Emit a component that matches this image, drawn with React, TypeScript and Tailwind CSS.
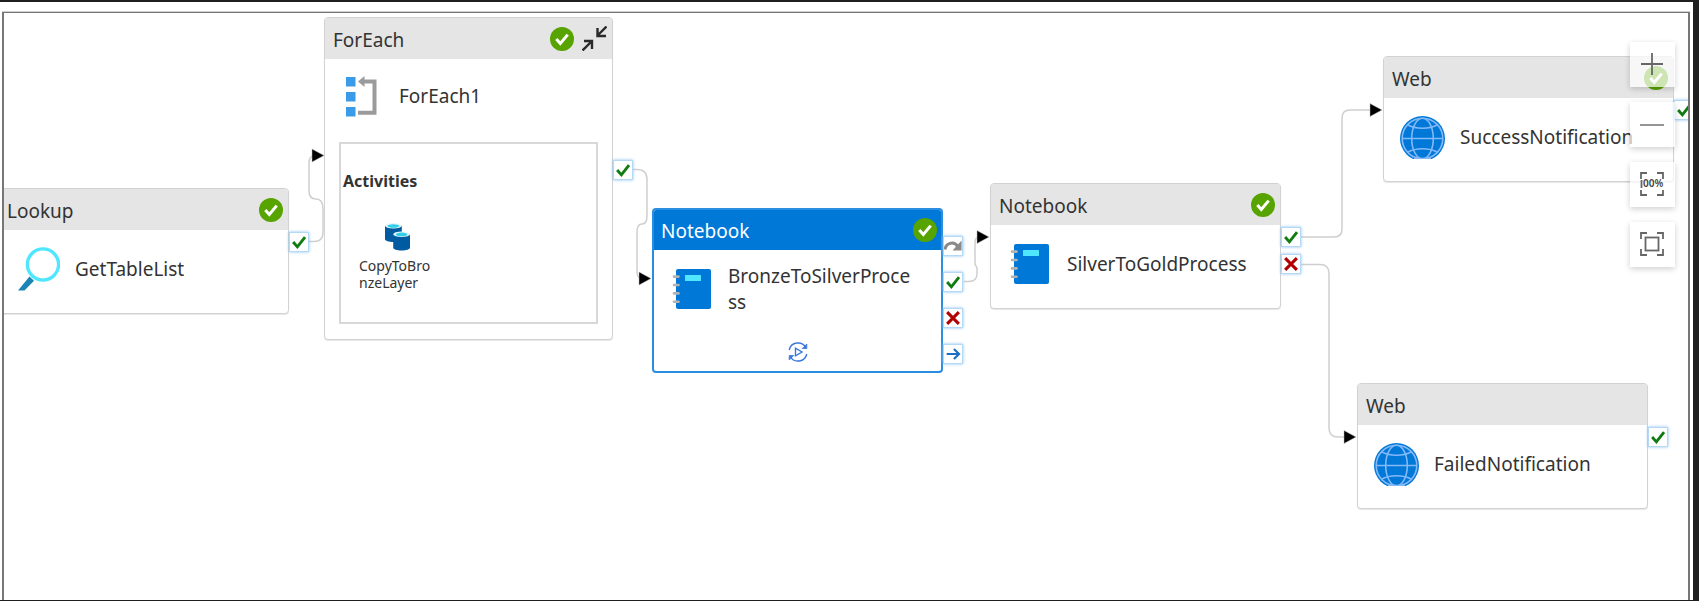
import type { ReactNode } from "react";

function StatusBadge() {
  return (
    <svg className="size-6 shrink-0" viewBox="0 0 24 24" role="img" aria-label="Succeeded">
      <circle cx="12" cy="12" r="12" fill="#57a300" />
      <path d="M6.3 12l4 4.400 7.400-8.800" fill="none" stroke="#fff" strokeWidth="3" />
    </svg>
  );
}

function LookupIcon() {
  return (
    <svg className="ml-1 h-11 w-[42px]" viewBox="0 0 42 44" aria-hidden="true">
      <path d="M11.5 29.5l4.5 4.3L6.5 43.5H0z" fill="#1b84b5" />
      <circle cx="25" cy="17.5" r="15.6" fill="#fff" stroke="#50e6ff" strokeWidth="3.4" />
    </svg>
  );
}

function ForEachIcon() {
  return (
    <svg className="h-[41px] w-8" viewBox="0 0 32 41" aria-hidden="true">
      <g fill="#3a9be8">
        <rect x="0" y="1" width="9.5" height="9.5" />
        <rect x="0" y="16" width="9.5" height="9.5" />
        <rect x="0" y="31" width="9.5" height="9.5" />
      </g>
      <path d="M17 5.5h11.5v31.3H12" fill="none" stroke="#9b9b9b" strokeWidth="4" />
      <path d="M12 5.5L18.5 0v11z" fill="#9b9b9b" />
    </svg>
  );
}

function NotebookIcon() {
  return (
    <svg className="h-10 w-[39px]" viewBox="0 0 39 40" aria-hidden="true">
      <rect x="4" y="0" width="35" height="40" rx="2" fill="#0078d7" />
      <rect x="13" y="6" width="16" height="6" rx="0.6" fill="#50e6ff" />
      <path d="M2 7.6h4.5M2 16h4.5M2 24.4h4.5M2 32.8h4.5" stroke="#b3b3b3" strokeWidth="2.6" strokeLinecap="round" />
    </svg>
  );
}

function GlobeIcon() {
  return (
    <svg className="h-[43px] w-[45px]" viewBox="0 0 45 43" aria-hidden="true">
      <circle cx="22.5" cy="22.5" r="22.5" fill="#0078d7" />
      <g fill="none" stroke="#83b9f9" strokeWidth="1.6">
        <circle cx="22.5" cy="22.5" r="20.3" />
        <ellipse cx="22.5" cy="22.5" rx="10.8" ry="20.3" />
        <path d="M2.2 22.5h40.6" />
        <path d="M7.5 8.8c8 4.6 22 4.6 30 0M7.5 36.2c8-4.6 22-4.6 30 0" />
      </g>
      <path d="M14 42.4h17" stroke="#83b9f9" strokeWidth="1.2" />
    </svg>
  );
}

function CopyDataIcon() {
  return (
    <svg className="h-7 w-[25px]" viewBox="0 0 25 28" aria-hidden="true">
      <path d="M0 2.8v13.4c0 1.5 3.8 2.8 8.4 2.8s8.4-1.3 8.4-2.8V2.8z" fill="#005ba1" />
      <ellipse cx="8.4" cy="2.8" rx="8.4" ry="2.8" fill="#e6f4fb" />
      <ellipse cx="8.4" cy="3" rx="5.8" ry="1.8" fill="#32cfe8" />
      <path d="M8.2 11.4v13.4c0 1.5 3.8 2.8 8.4 2.8s8.4-1.3 8.4-2.8V11.4z" fill="#005ba1" />
      <ellipse cx="16.6" cy="11.2" rx="8.4" ry="2.8" fill="#e6f4fb" />
      <ellipse cx="16.6" cy="11.4" rx="5.8" ry="1.8" fill="#32cfe8" />
    </svg>
  );
}

function CollapseIcon() {
  return (
    <svg className="size-[25px]" viewBox="0 0 25 25" fill="none" stroke="#2a2a2a" strokeWidth="2.4" aria-hidden="true">
      <path d="M24.500.5L15.500 9.500M15.500 2v8h8.500" />
      <path d="M.5 24.500l9.500-9.500M2 15h8v8" />
    </svg>
  );
}

function RerunIcon() {
  return (
    <svg className="size-5" viewBox="0 0 20 20" fill="none" stroke="#3b78dc" strokeWidth="1.4" aria-hidden="true">
      <path d="M1.2 8A9 9 0 0 1 17.8 5.500M18.800 12A9 9 0 0 1 2.200 14.500" />
      <path d="M18.800 2v4.500h-4.500zM1.200 18v-4.500h4.500z" fill="#3b78dc" strokeWidth="0.8" />
      <path d="M7.500 6.200v7.600l6.500-3.800z" />
    </svg>
  );
}

type PortKind = "skip" | "success" | "fail" | "completion";

const portLabels: Record<PortKind, string> = {
  skip: "On skip",
  success: "On success",
  fail: "On fail",
  completion: "On completion",
};

const portDrawings: Record<PortKind, ReactNode> = {
  skip: (
    <>
      <path d="M1 14C2.500 5.500 12 4.500 15.500 11" stroke="#8a8a8a" strokeWidth="3.4" />
      <path d="M19.500 4v11H9.500z" fill="#8a8a8a" />
    </>
  ),
  success: <path d="M3.500 10l4.700 5.400L16.700 4.500" stroke="#107c10" strokeWidth="3.2" />,
  fail: <path d="M3.500 3.500l13 13M16.500 3.500l-13 13" stroke="#b00000" strokeWidth="3.4" />,
  completion: <path d="M3 10h13.500M11 4.500l5.700 5.500-5.700 5.500" stroke="#1a6fc4" strokeWidth="2.4" />,
};

function Port({ kind, className }: { kind: PortKind; className: string }) {
  return (
    <span
      className={`absolute left-full size-5 border border-[#b5d8f5] bg-white shadow-[0_0_3px_#8cc3f2] ${className}`}
      role="img"
      aria-label={portLabels[kind]}
    >
      <svg className="size-[18px]" viewBox="0 0 20 20" fill="none">
        {portDrawings[kind]}
      </svg>
    </span>
  );
}

interface ActivityProps {
  type: string;
  name: string;
  icon: ReactNode;
  place: string;
  ports: ReactNode;
  succeeded?: boolean;
  selected?: boolean;
  container?: boolean;
  action?: ReactNode;
  children?: ReactNode;
}

function Activity({
  type,
  name,
  icon,
  place,
  ports,
  succeeded = true,
  selected = false,
  container = false,
  action,
  children,
}: ActivityProps) {
  return (
    <article className={`absolute ${place}`}>
      <div
        className={`size-full overflow-hidden rounded bg-white ${
          selected ? "border-2 border-[#2b8de0]" : "border border-[#d2d2d2] shadow-[0_1px_1px_#0000001a]"
        }`}
      >
        <header
          className={`flex items-center gap-2 ${
            selected ? "h-10 bg-[#0078d7] pr-1 pl-[7px] text-white" : "h-[41px] bg-[#e5e5e5] pr-[5px] pl-2"
          }`}
        >
          <h2 className="flex-1 pt-0.5">{type}</h2>
          {succeeded && <StatusBadge />}
          {action}
        </header>
        <div className={`flex items-center ${container ? "h-[74px]" : "h-[78px]"}`}>
          <div className={`flex shrink-0 justify-center ${container || selected ? "w-[74px]" : "w-[76px]"}`}>{icon}</div>
          <p className="w-[184px] break-all">{name}</p>
        </div>
        {children}
      </div>
      {ports}
    </article>
  );
}

function Connectors() {
  return (
    <svg className="absolute top-0 left-0 h-[580px] w-[1684px]" fill="none" stroke="#cfcfcf" strokeWidth="1.5" aria-hidden="true">
      <path d="M305 228.500h5q9 0 9-9V196q0-10-7-10t-7-8V150q0-7 5-7" />
      <path d="M629 156.500h4q10 0 10 10V203q0 8-5 8t-5 8V258q0 7 4 7" />
      <path d="M960 268.500h5q8 0 8-8V256q0-2-1-3t-1-3V230q0-6 4-6" />
      <path d="M1297 224h33q8 0 8-8V105q0-8 8-8h22" />
      <path d="M1297 251.500h19q9 0 9 9V415q0 9 9 9h10" />
      <g fill="#000" stroke="#bbb" strokeWidth="0.5">
        <path d="M308 136l12 6.500-12 6.500z" />
        <path d="M635 259l12 6.500-12 6.500z" />
        <path d="M973 217.500l12 6.500-12 6.500z" />
        <path d="M1366 90.500l12 6.500-12 6.500z" />
        <path d="M1340 417.500l12 6.500-12 6.500z" />
      </g>
    </svg>
  );
}

function ZoomButton({ label, children }: { label: string; children: ReactNode }) {
  return (
    <button
      type="button"
      aria-label={label}
      className="flex size-[45px] items-center justify-center bg-white/70 pr-0.5 pb-0.5 shadow-[0_2px_6px_#00000030]"
    >
      <svg className="size-6" viewBox="0 0 24 24" fill="none" stroke="#666" strokeWidth="1.8" aria-hidden="true">
        {children}
      </svg>
    </button>
  );
}

export default function App() {
  return (
    <div className="h-screen bg-[#201f20] pt-0.5 pr-1.5 pb-px font-['Noto_Sans','Open_Sans',sans-serif] text-[19px] leading-[26px] text-[#333]">
      <div className="h-full bg-white pt-[9px] pr-[3px] pl-0.5">
        <div className="h-full border-t border-[#cfcfcf]">
          <main className="relative h-full overflow-hidden border-x-2 border-t border-[#777] bg-white">
            <Connectors />

            <Activity
              type="Lookup"
              name="GetTableList"
              icon={<LookupIcon />}
              place="top-[175px] left-[-6px] h-[126px] w-[291px]"
              ports={<Port kind="success" className="top-11" />}
            />

            <Activity
              type="ForEach"
              name="ForEach1"
              icon={<ForEachIcon />}
              place="top-1 left-[320px] h-[323px] w-[289px]"
              container
              ports={<Port kind="success" className="top-[143px]" />}
              action={
                <button type="button" aria-label="Collapse">
                  <CollapseIcon />
                </button>
              }
            >
              <section className="mx-3.5 mt-[9px] h-[182px] border-2 border-[#d8d8d8] pt-6 pl-0.5">
                <h3 className="text-[16px] leading-[26px] font-bold">Activities</h3>
                <div className="mt-[29px] ml-4 w-[74px]">
                  <div className="flex h-7 pl-[26px]">
                    <CopyDataIcon />
                  </div>
                  <p className="mt-1.5 text-[14px] leading-[17px] break-all">CopyToBronzeLayer</p>
                </div>
              </section>
            </Activity>

            <Activity
              type="Notebook"
              name="BronzeToSilverProcess"
              icon={<NotebookIcon />}
              place="top-[195px] left-[648px] h-[165px] w-[291px]"
              selected
              ports={
                <>
                  <Port kind="skip" className="top-7" />
                  <Port kind="success" className="top-16" />
                  <Port kind="fail" className="top-[100px]" />
                  <Port kind="completion" className="top-[136px]" />
                </>
              }
            >
              <div className="flex justify-center pt-3.5">
                <button type="button" aria-label="Rerun from this activity">
                  <RerunIcon />
                </button>
              </div>
            </Activity>

            <Activity
              type="Notebook"
              name="SilverToGoldProcess"
              icon={<NotebookIcon />}
              place="top-[170px] left-[986px] h-[126px] w-[291px]"
              ports={
                <>
                  <Port kind="success" className="top-11" />
                  <Port kind="fail" className="top-[71px]" />
                </>
              }
            />

            <Activity
              type="Web"
              name="SuccessNotification"
              icon={<GlobeIcon />}
              place="top-[43px] left-[1379px] h-[126px] w-[291px]"
              ports={<Port kind="success" className="top-11" />}
            />

            <Activity
              type="Web"
              name="FailedNotification"
              icon={<GlobeIcon />}
              place="top-[370px] left-[1353px] h-[126px] w-[291px]"
              succeeded={false}
              ports={<Port kind="success" className="top-11" />}
            />

            <div className="absolute top-[29px] right-[13px] flex flex-col gap-[15px]" role="toolbar" aria-label="Canvas zoom">
              <ZoomButton label="Zoom in">
                <path d="M1 12h22M12 1v22" />
              </ZoomButton>
              <ZoomButton label="Zoom out">
                <path d="M0 13h24" stroke="#8a8a8a" />
              </ZoomButton>
              <ZoomButton label="Zoom to 100%">
                <path d="M1 7V1h6M17 1h6v6M23 18v5h-6M7 23H1v-5M1.500 8v8" />
                <text x="3" y="15" fill="#444" stroke="none" className="text-[10px] font-semibold">
                  00%
                </text>
              </ZoomButton>
              <ZoomButton label="Zoom to fit">
                <path d="M1 7V1h6M17 1h6v6M23 17v6h-6M7 23H1v-6" />
                <rect x="5.500" y="5.500" width="13" height="13" />
              </ZoomButton>
            </div>
          </main>
        </div>
      </div>
    </div>
  );
}
